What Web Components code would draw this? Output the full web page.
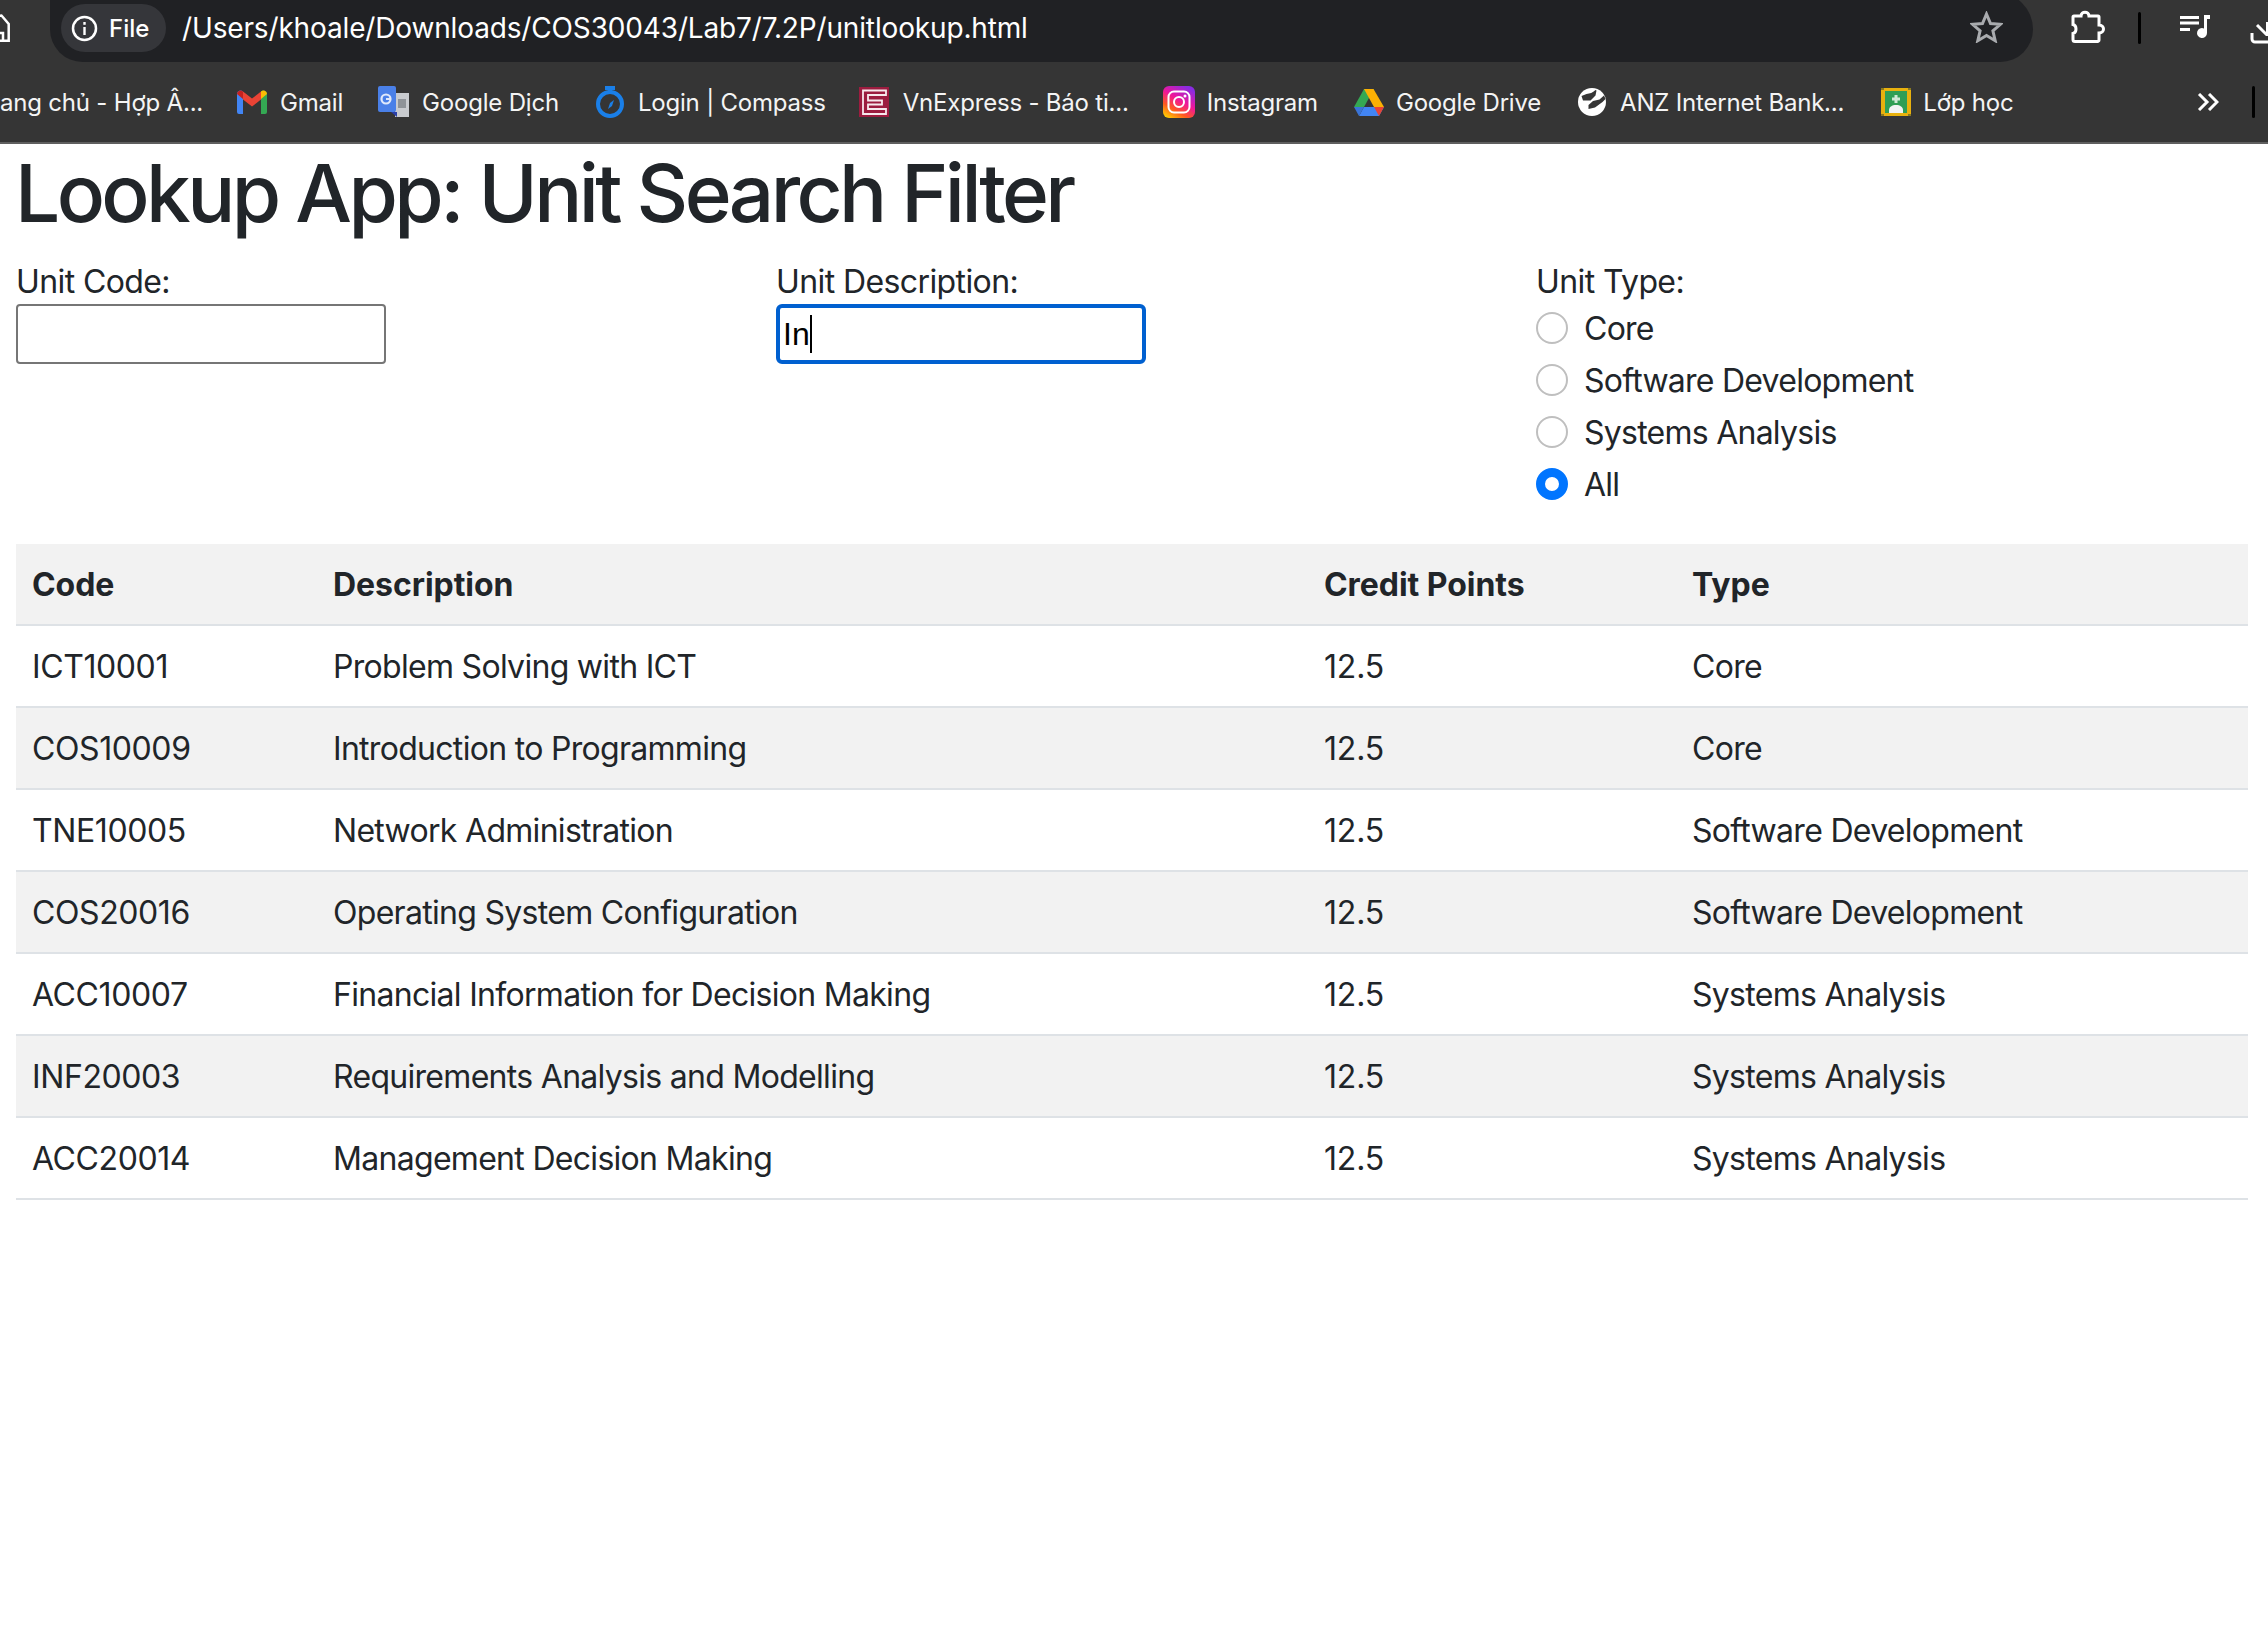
<!DOCTYPE html>
<html lang="en">
<head>
<meta charset="utf-8">
<title>Lookup App</title>
<style>
  html, body { margin: 0; background: #fff; overflow: hidden; }
  body { font-family: Inter, "Noto Sans", sans-serif; color: #212529; }
  svg { display: block; }
</style>
</head>
<body>
<browser-chrome url="/Users/khoale/Downloads/COS30043/Lab7/7.2P/unitlookup.html">
  <bookmark-item><span>ang chủ - Hợp Â...</span></bookmark-item>
  <bookmark-item style="margin-left:34px;gap:13px">
    <svg slot="icon" width="30" height="24" viewBox="0 0 30 24"><path d="M0 4a3.500 3.500 0 0 1 6-2.400V24H2a2 2 0 0 1-2-2z" fill="#4285f4"/><path d="M24 1.600A3.500 3.500 0 0 1 30 4v18a2 2 0 0 1-2 2h-4z" fill="#34a853"/><path d="M6 1.600l9 7 9-7v8l-9 7-9-7z" fill="#ea4335"/><path d="M0 4l6 5V1.600A3.500 3.500 0 0 0 0 4z" fill="#c5221f"/><path d="M24 1.600V9l6-5a3.500 3.500 0 0 0-6-2.400z" fill="#fbbc04"/></svg>
    Gmail</bookmark-item>
  <bookmark-item style="margin-left:35px">
    <svg slot="icon" width="32" height="32" viewBox="0 0 32 32"><rect x="17" y="7" width="14" height="24" fill="#c9cbcf"/><rect x="20" y="13" width="8" height="9" fill="#8f9398"/><path d="M13 26h6v5z" fill="#2a3fa8"/><rect x="0" y="0" width="18" height="26" rx="2" fill="#4a80e8"/><circle cx="8" cy="13" r="4.500" fill="none" stroke="#dfe8fb" stroke-width="2.200"/><rect x="8" y="12" width="5" height="2" fill="#dfe8fb"/></svg>
    Google Dịch</bookmark-item>
  <bookmark-item style="margin-left:37px;gap:14px">
    <svg slot="icon" width="28" height="32" viewBox="0 0 28 32"><rect x="9" y="0" width="10" height="4" fill="#1a7fe8"/><rect x="12" y="3" width="4" height="3" fill="#1a7fe8"/><circle cx="14" cy="18" r="12" fill="none" stroke="#1a7fe8" stroke-width="4"/><path d="M18 14l-2 6-4 3 2-6z" fill="#1a7fe8"/></svg>
    Login | Compass</bookmark-item>
  <bookmark-item style="margin-left:33px;gap:14px">
    <svg slot="icon" width="30" height="30" viewBox="0 0 30 30"><rect width="30" height="30" fill="#9c1c3f"/><path d="M4 3.500h23v4.500H9v5.500h14v4H9V22h18v5H4z" fill="none" stroke="#f7e9ed" stroke-width="1.800"/></svg>
    VnExpress - Báo ti...</bookmark-item>
  <bookmark-item style="margin-left:34px">
    <svg slot="icon" width="32" height="32" viewBox="0 0 32 32"><defs><linearGradient id="ig" x1="0.100" y1="1" x2="0.700" y2="0"><stop offset="0" stop-color="#ffd600"/><stop offset="0.300" stop-color="#ff5a1f"/><stop offset="0.600" stop-color="#f0169a"/><stop offset="1" stop-color="#8a2be2"/></linearGradient></defs><rect width="32" height="32" rx="6" fill="url(#ig)"/><rect x="5.500" y="5.500" width="21" height="21" rx="5.500" fill="none" stroke="#fff" stroke-width="2"/><circle cx="16" cy="16" r="5" fill="none" stroke="#fff" stroke-width="2"/><circle cx="22" cy="10" r="1.500" fill="#fff"/></svg>
    Instagram</bookmark-item>
  <bookmark-item style="margin-left:36px">
    <svg slot="icon" width="30" height="27" viewBox="0 0 30 27"><path d="M10 0h10l-5 9-5 9H0z" fill="#34a853"/><path d="M10 0h9.500L30 18H20z" fill="#fbb004"/><path d="M5 27h20l5-9H10z" fill="#4285f4"/><path d="M0 18l5 9 5-9z" fill="#3a74d8"/><path d="M20 18h10l-5 9z" fill="#ea4335"/></svg>
    Google Drive</bookmark-item>
  <bookmark-item style="margin-left:37px;gap:14px">
    <svg slot="icon" width="28" height="28" viewBox="0 0 28 28"><circle cx="14" cy="14" r="14" fill="#fff"/><path d="M17.500 2C14.500 5 12 5.500 8.500 6L3.500 8 5 12.500 12.500 12.500 17.500 7.500 18.500 2.500z" fill="#353535"/><path d="M26 7.500l-4.500 4-6.500 1.500-4.500 4v4l6.500-1.500L24.500 14 27.500 11z" fill="#353535"/></svg>
    ANZ Internet Bank...</bookmark-item>
  <bookmark-item style="margin-left:37px;gap:12px">
    <svg slot="icon" width="30" height="28" viewBox="0 0 30 28"><rect width="30" height="28" fill="#e8b10e"/><path d="M0 0h3v2H0zM27 0h3v2h-3zM0 26h3v2H0zM27 26h3v2h-3z" fill="#8a7a20"/><rect x="4" y="3" width="22" height="22" fill="#2f9e55"/><path d="M13.500 7h3v2.500H19v3h-2.500V15h-3v-2.500H11v-3h2.500z" fill="#cfe8d6"/><path d="M8 25v-3c0-3 3-5 7-5s7 2 7 5v3z" fill="#f1f3f4"/></svg>
    Lớp học</bookmark-item>
</browser-chrome>

<main-page>
  <page-heading>Lookup App: Unit Search Filter</page-heading>
  <filter-row>
    <text-field label="Unit Code:"></text-field>
    <text-field label="Unit Description:" value="In" focused></text-field>
    <radio-group label="Unit Type:">
      <radio-option>Core</radio-option>
      <radio-option>Software Development</radio-option>
      <radio-option>Systems Analysis</radio-option>
      <radio-option checked>All</radio-option>
    </radio-group>
  </filter-row>
  <unit-table></unit-table>
</main-page>

<script>
class BrowserChrome extends HTMLElement {
  constructor() {
    super();
    this.attachShadow({ mode: "open" });
  }

  connectedCallback() {
    this.shadowRoot.innerHTML = `
    <style>
      :host { display: block; height: 144px; box-sizing: border-box; background: #353535; border-bottom: 2px solid #5f5f5f; overflow: hidden; color: #fff; font-family: Inter, sans-serif; }
      .top { display: flex; align-items: center; height: 62px; }
      .home { width: 10px; margin-right: 40px; margin-top: -6px; flex: none; }
      .omni { flex: none; width: 1983px; height: 70px; margin-top: -8px; box-sizing: border-box; padding: 8px 30px 0 11px; border-radius: 0 40px 35px 35px / 0 40px 35px 35px; background: #202124; display: flex; align-items: center; }
      .chip { flex: none; display: flex; align-items: center; gap: 11px; width: 105px; height: 48px; margin-top: -6px; box-sizing: border-box; padding-left: 10px; border-radius: 24px; background: #35363a; font-size: 24px; font-weight: 500; }
      .url { margin-left: 16px; margin-top: -6px; font-size: 28px; letter-spacing: -0.15px; flex: 1; white-space: nowrap; }
      .tools { display: flex; align-items: center; flex: none; }
      .book { display: flex; align-items: center; height: 80px; white-space: nowrap; }
      .more { margin-left: auto; margin-right: 13px; display: flex; align-items: center; gap: 33px; }
      .bar { width: 3px; height: 32px; border-radius: 2px; background: #000; }
    </style>
    <div class="top">
      <svg class="home" width="10" height="28" viewBox="0 0 10 28"><path d="M-1 2L1.500 1.500 8.700 10V26.700H-1M-1 19H3V26" fill="none" stroke="#fff" stroke-width="2.500"/></svg>
      <div class="omni">
        <div class="chip">
          <svg width="27" height="27" viewBox="0 0 27 27"><circle cx="13.500" cy="13.500" r="11.500" fill="none" stroke="#fff" stroke-width="2.500"/><rect x="12.300" y="12" width="2.400" height="8" fill="#fff"/><rect x="12.300" y="7" width="2.400" height="2.800" fill="#fff"/></svg>
          <span>File</span>
        </div>
        <span class="url">${this.getAttribute("url")}</span>
        <svg style="margin-top:-8px" width="33" height="32" viewBox="0 0 33 32"><path d="M16.500 3l4 9.500 10 .8-7.600 6.600 2.300 9.800-8.700-5.200-8.700 5.200 2.300-9.800L2.500 13.300l10-.8z" fill="none" stroke="#a9abae" stroke-width="3"/></svg>
      </div>
      <div class="tools">
        <svg style="margin-left:38px;margin-top:-9px" width="34" height="33" viewBox="0 0 34 33"><path d="M3 6h7c0-5 8-5 8 0h9a1 1 0 0 1 1 1v8c6 0 6 8 0 8v7a1.500 1.500 0 0 1-1.500 1.500H4a2 2 0 0 1-2-2v-6c4-1 4-8 0-9V7a1 1 0 0 1 1-1z" fill="none" stroke="#fff" stroke-width="3"/></svg>
        <div class="bar" style="margin-left:33px;margin-top:-6px"></div>
        <svg style="margin-left:39px;margin-top:-9px" width="31" height="24" viewBox="0 0 31 24"><path d="M0 1h19v3H0zM0 6.500h19v3H0zM0 13h10v3H0z" fill="#fff"/><path d="M24 0h6v4h-3v14a5 5 0 1 1-3-4.500z" fill="#fff"/></svg>
        <svg style="margin-left:39px;margin-top:4px" width="18" height="22" viewBox="0 0 18 22"><path d="M2 11v6a3 3 0 0 0 3 3h13" fill="none" stroke="#fff" stroke-width="3"/><path d="M7 3l10 10" fill="none" stroke="#fff" stroke-width="3"/><rect x="16" y="0" width="2" height="14" fill="#fff"/></svg>
      </div>
    </div>
    <div class="book">
      <slot></slot>
      <div class="more">
        <svg width="22" height="18" viewBox="0 0 22 18"><path d="M2 1l8 8-8 8M12 1l8 8-8 8" fill="none" stroke="#fff" stroke-width="3"/></svg>
        <div class="bar"></div>
      </div>
    </div>
  `;
  }
}

class BookmarkItem extends HTMLElement {
  constructor() {
    super();
    this.attachShadow({ mode: "open" }).innerHTML = `
    <style>
      :host { display: inline-flex; align-items: center; gap: 12px; font-size: 24px; letter-spacing: -0.2px; font-family: Inter, sans-serif; color: #f4f4f4; white-space: nowrap; }
    </style>
    <slot name="icon"></slot><slot></slot>
  `;
  }
}

class MainPage extends HTMLElement {
  constructor() {
    super();
    this.attachShadow({ mode: "open" }).innerHTML = `
    <style>
      :host { display: block; padding: 0 20px 0 16px; }
    </style>
    <slot></slot>
  `;
  }
}

class PageHeading extends HTMLElement {
  constructor() {
    super();
    this.attachShadow({ mode: "open" }).innerHTML = `
    <style>
      :host { display: block; margin-bottom: 16px; }
      h1 { margin: 0 0 0 -1px; padding-top: 1px; height: 95px; font: 500 80px/96px Inter, sans-serif; letter-spacing: -3.6px; color: #212529; }
    </style>
    <h1><slot></slot></h1>
  `;
  }
}

class FilterRow extends HTMLElement {
  constructor() {
    super();
    this.attachShadow({ mode: "open" }).innerHTML = `
    <style>
      :host { display: grid; grid-template-columns: repeat(3, 760px); margin-bottom: 32px; }
    </style>
    <slot></slot>
  `;
  }
}

class TextField extends HTMLElement {
  constructor() {
    super();
    this.attachShadow({ mode: "open" });
  }

  connectedCallback() {
    const focused = this.hasAttribute("focused");
    const value = this.getAttribute("value");
    this.shadowRoot.innerHTML = `
    <style>
      :host { display: block; }
      label { display: block; padding-top: 2px; height: 46px; font: 400 32px/48px Inter, sans-serif; letter-spacing: -0.6px; color: #212529; }
      .box { display: flex; align-items: center; width: 370px; height: 60px; box-sizing: border-box; padding-left: 4px; border: 2px solid #767676; border-radius: 4px; font: 32px "Liberation Sans", sans-serif; color: #000; }
      .box.focus { border: 4px solid #0060d0; padding-left: 3px; border-radius: 6px; }
      .caret { width: 2px; height: 38px; background: #000; }
    </style>
    <label>${this.getAttribute("label")}</label>
    <div class="box ${focused ? "focus" : ""}">${value ? `<span>${value}</span>` : ""}${focused ? `<span class="caret"></span>` : ""}</div>
  `;
  }
}

class RadioGroup extends HTMLElement {
  constructor() {
    super();
    this.attachShadow({ mode: "open" });
  }

  connectedCallback() {
    this.shadowRoot.innerHTML = `
    <style>
      :host { display: block; }
      .title { padding-top: 2px; height: 46px; font: 400 32px/48px Inter, sans-serif; letter-spacing: -0.6px; color: #212529; }
    </style>
    <div class="title">${this.getAttribute("label")}</div>
    <slot></slot>
  `;
  }
}

class RadioOption extends HTMLElement {
  constructor() {
    super();
    this.attachShadow({ mode: "open" });
  }

  connectedCallback() {
    this.shadowRoot.innerHTML = `
    <style>
      :host { display: flex; align-items: center; gap: 16px; height: 48px; margin-bottom: 4px; font: 400 32px/48px Inter, sans-serif; letter-spacing: -0.75px; color: #212529; }
      .dot { flex: none; width: 32px; height: 32px; box-sizing: border-box; border-radius: 50%; border: 2px solid #bfbfbf; background: #fff; }
      .dot.on { border: 9px solid #0075ff; }
      .txt { padding-top: 2px; }
    </style>
    <span class="dot ${this.hasAttribute("checked") ? "on" : ""}"></span>
    <span class="txt"><slot></slot></span>
  `;
  }
}

const UNITS = [
  ["ICT10001", "Problem Solving with ICT", "12.5", "Core"],
  ["COS10009", "Introduction to Programming", "12.5", "Core"],
  ["TNE10005", "Network Administration", "12.5", "Software Development"],
  ["COS20016", "Operating System Configuration", "12.5", "Software Development"],
  ["ACC10007", "Financial Information for Decision Making", "12.5", "Systems Analysis"],
  ["INF20003", "Requirements Analysis and Modelling", "12.5", "Systems Analysis"],
  ["ACC20014", "Management Decision Making", "12.5", "Systems Analysis"],
];

class UnitTable extends HTMLElement {
  constructor() {
    super();
    this.attachShadow({ mode: "open" });
  }

  connectedCallback() {
    const rows = UNITS.map((u) => `<tr>${u.map((c) => `<td>${c}</td>`).join("")}</tr>`).join("");
    this.shadowRoot.innerHTML = `
    <style>
      :host { display: block; width: 2232px; }
      table { width: 100%; table-layout: fixed; border-collapse: separate; border-spacing: 0; font: 400 32px/48px Inter, sans-serif; color: #212529; }
      th, td { height: 82px; box-sizing: border-box; padding: 2px 16px 0; text-align: left; border-bottom: 2px solid #dee2e6; vertical-align: middle; }
      th { font-weight: 700; letter-spacing: -0.05px; }
      td { letter-spacing: -0.7px; }
      td:first-child { letter-spacing: -0.4px; }
      td:nth-child(3) { letter-spacing: -0.2px; }
      thead tr, tbody tr:nth-child(even) { background: #f2f2f2; }
    </style>
    <table>
      <colgroup><col style="width:301px"><col style="width:991px"><col style="width:368px"><col></colgroup>
      <thead><tr><th>Code</th><th>Description</th><th>Credit Points</th><th>Type</th></tr></thead>
      <tbody>${rows}</tbody>
    </table>
  `;
  }
}

customElements.define("browser-chrome", BrowserChrome);
customElements.define("bookmark-item", BookmarkItem);
customElements.define("main-page", MainPage);
customElements.define("page-heading", PageHeading);
customElements.define("filter-row", FilterRow);
customElements.define("text-field", TextField);
customElements.define("radio-group", RadioGroup);
customElements.define("radio-option", RadioOption);
customElements.define("unit-table", UnitTable);
</script>
</body>
</html>
